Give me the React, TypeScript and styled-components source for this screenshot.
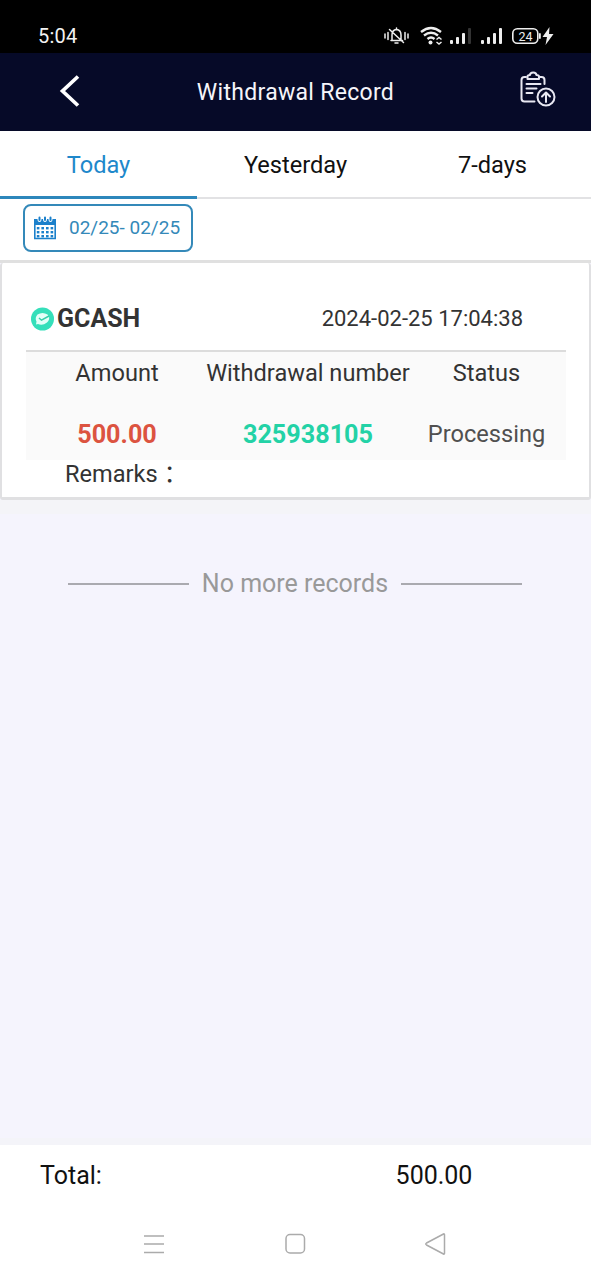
import React from "react";
import styled, { createGlobalStyle } from "styled-components";

const GlobalStyle = createGlobalStyle`
  * { box-sizing: border-box; }
  body {
    margin: 0;
    background: #f5f4fd;
    font-family: Roboto, "Noto Sans CJK SC", sans-serif;
    color: #333;
  }
  svg { display: block; flex: none; }
`;

const Screen = styled.div`
  width: 591px;
  height: 1280px;
  display: flex;
  flex-direction: column;
  overflow: hidden;
`;

const StatusBar = styled.div`
  height: 53px;
  flex: none;
  background: #000;
  color: #f2f2f2;
  display: flex;
  align-items: center;
  justify-content: space-between;
  padding: 19px 36px 0 38px;
`;

const Clock = styled.span`
  font-size: 20px;
  line-height: 34px;
  letter-spacing: 0.2px;
`;

const Header = styled.header`
  height: 78px;
  flex: none;
  background: #060a28;
  color: #f5f5fa;
  display: grid;
  grid-template-columns: 140px 1fr 140px;
  align-items: center;
`;

const BackButton = styled.button`
  border: 0;
  background: none;
  padding: 0 0 2px 58px;
`;

const Title = styled.h1`
  margin: 0;
  padding-top: 2px;
  font-size: 23px;
  line-height: 30px;
  letter-spacing: 0.3px;
  font-weight: 400;
  text-align: center;
  white-space: nowrap;
`;

const RecordButton = styled.button`
  border: 0;
  background: none;
  padding: 0 0 6px 67px;
  justify-self: start;
`;

const Tabs = styled.nav`
  height: 68px;
  flex: none;
  background: #fff;
  display: grid;
  grid-template-columns: repeat(3, 1fr);
  grid-template-rows: 68px;
`;

const Tab = styled.div<{ $active?: boolean }>`
  text-align: center;
  font-size: 23.6px;
  line-height: 69px;
  color: ${(p) => (p.$active ? "#1e88cb" : "#111")};
  box-shadow: inset 0 ${(p) => (p.$active ? "-3px #2d87bb" : "-2px #e2e2e4")};
`;

const FilterBar = styled.div`
  height: 64px;
  flex: none;
  background: #fff;
  padding: 5px 23px 0;
  border-bottom: 3px solid #e0e0e0;
`;

const DateRange = styled.button`
  width: 170px;
  height: 48px;
  padding: 0 0 1px 9px;
  display: flex;
  align-items: center;
  gap: 13px;
  border: 2px solid #3489b9;
  border-radius: 8px;
  background: #fff;
  color: #3489b9;
  font-family: inherit;
  font-size: 19px;
  white-space: nowrap;
`;

const Card = styled.section`
  height: 237px;
  flex: none;
  background: #fff;
  border: 2px solid #e0e0e2;
  border-top: 0;
  border-bottom-width: 3px;
  border-radius: 3px;
  padding: 31px 23px 0 24px;
`;

const CardHead = styled.div`
  height: 58px;
  padding: 0 43px 0 4px;
  display: flex;
  justify-content: space-between;
  border-bottom: 2px solid #dcdcdc;
`;

const Wallet = styled.div`
  display: flex;
  align-items: center;
  height: 48px;
  gap: 2px;
  font-size: 25px;
  font-weight: 700;
`;

const Timestamp = styled.time`
  font-size: 22px;
  line-height: 49px;
`;

const Details = styled.div`
  height: 108px;
  background: #fafafa;
  display: grid;
  grid-template-columns: 182px 200px 157px;
  grid-template-rows: 44px 64px;
  text-align: center;
`;

const Label = styled.div`
  display: flex;
  justify-content: center;
  font-size: 23.6px;
  line-height: 42px;
  white-space: nowrap;
`;

const Value = styled.div<{ $color: string; $strong?: boolean }>`
  font-size: ${(p) => (p.$strong ? 25.2 : 23.6)}px;
  font-weight: ${(p) => (p.$strong ? 700 : 400)};
  line-height: ${(p) => (p.$strong ? 78 : 77)}px;
  color: ${(p) => p.$color};
`;

const Remarks = styled.div`
  display: flex;
  gap: 6px;
  padding-left: 39px;
  font-size: 23.6px;
  line-height: 28px;
`;

const Records = styled.main`
  flex: 1;
  background: #f5f4fd;
  border-top: 14px solid #f4f4f8;
  border-bottom: 7px solid #f4f4f9;
`;

const EndOfList = styled.div`
  display: flex;
  align-items: center;
  justify-content: space-between;
  margin: 54px 69px 0 68px;
  font-size: 25px;
  line-height: 32px;
  color: #999;
`;

const Rule = styled.span`
  width: 121px;
  height: 2px;
  background: #aaaab0;
`;

const TotalBar = styled.footer`
  height: 62px;
  flex: none;
  background: #fff;
  color: #111;
  display: grid;
  grid-template-columns: 277px 314px;
  font-size: 25px;
  line-height: 62px;
`;

const TotalLabel = styled.span`
  padding-left: 40px;
`;

const TotalValue = styled.span`
  text-align: center;
`;

const SystemNav = styled.div`
  height: 73px;
  flex: none;
  background: #fff;
  display: flex;
  justify-content: space-between;
  padding: 25px 144px 0 142px;
`;

const StatusIcons = () => (
  <svg width="172" height="24" viewBox="383 24 172 24" fill="none" stroke="#eee">
    <g strokeWidth="1.500" strokeLinecap="round">
      <path d="M385 34v4M388 32.500v7M405 32.500v7M408 34v4" />
      <path d="M391 40.500h11.500M392 40v-5q0-5 4.500-5.500 4.500.5 4.500 5.500v5M396.500 28v1.500M395 43h3M389.500 29.500l14 13" />
    </g>
    <g strokeWidth="2.400">
      <path d="M421 32q10-8 20 0M424 35.500q7-5.500 14 0M427.500 39q3.500-3 7 0" />
    </g>
    <circle cx="430.500" cy="42.500" r="2" fill="#eee" stroke="none" />
    <path d="M436.500 39.500l2.500-2 2.500 2M436.500 42l2.500 2 2.500-2" strokeWidth="1.500" />
    <g stroke="none" fill="#eee">
      <rect x="450" y="40" width="3" height="4" rx="1" />
      <rect x="456" y="37" width="3" height="7" rx="1" />
      <rect x="462" y="33" width="3" height="11" rx="1" />
      <rect x="468" y="28" width="3" height="16" rx="1" fill="#333" />
      <rect x="481" y="40" width="3" height="4" rx="1" />
      <rect x="487" y="37" width="3" height="7" rx="1" />
      <rect x="493" y="33" width="3" height="11" rx="1" />
      <rect x="499" y="28" width="3" height="16" rx="1" />
      <rect x="539" y="33" width="1.800" height="6" rx="1" />
      <path d="M549.500 27l-7 10h4.500l-1.500 8 8-11h-4.500z" />
      <text x="525.500" y="40.500" fontSize="12.500" textAnchor="middle" fontFamily="Roboto, sans-serif">24</text>
    </g>
    <rect x="512.800" y="28.800" width="25" height="14.500" rx="4.500" strokeWidth="1.600" />
  </svg>
);

const BackIcon = () => (
  <svg width="24" height="34" viewBox="58 74 24 34" fill="none" stroke="#fff" strokeWidth="3.700" strokeLinejoin="miter">
    <path d="M78 76.500L62.500 91 78 105.500" />
  </svg>
);

const RecordIcon = () => (
  <svg width="40" height="40" viewBox="518 69 40 40" fill="none" stroke="#e8e8f2" strokeWidth="2" strokeLinecap="round" strokeLinejoin="round">
    <path d="M526 77h-1.500q-3 0-3 3v18.500q0 3 3 3h10M540 77h1.500q3 0 3 3v4" />
    <path d="M527.500 79v-2.500q0-1.500 2.500-1.500 0-2.500 3.200-2.500t3.200 2.500q2.600 0 2.600 1.500V79z" />
    <path d="M526.500 84h14M526.500 88.500h10M526.500 93h6" />
    <circle cx="546" cy="97" r="8.500" />
    <path d="M546 102v-9M542 96.500l4-4 4 4" />
  </svg>
);

const dots = [11, 15, 19].flatMap((y) => [4, 8.6, 13.2, 17.8].map((x) => [x, y]));

const CalendarIcon = () => (
  <svg width="22" height="24" viewBox="0 0 22 24">
    <path d="M0 3h3.500q0 3 2 3t2-3h1.500q0 3 2 3t2-3h1.500q0 3 2 3t2-3H22V9H0z" fill="#1b80cb" />
    <path d="M5.500 1.500v2.500M16.500 1.500v2.500M11 1.500v2.500" stroke="#1b80cb" strokeWidth="2" strokeLinecap="round" />
    <path d="M.8 8v14.500h20.400V8" fill="none" stroke="#1b80cb" strokeWidth="1.600" />
    {dots.map(([x, y]) => (
      <rect key={`${x}-${y}`} x={x - 1.2} y={y} width="2.600" height="2.400" fill="#1b80cb" />
    ))}
  </svg>
);

const WalletIcon = () => (
  <svg width="25" height="25" viewBox="0 0 25 25">
    <circle cx="12.500" cy="13" r="11.500" fill="#35dfba" />
    <path d="M7.500 8.500Q12.500 5.500 17.500 8.500q3.500 4-.5 8-4.500 3.500-9 1.500l-2 .5.500-3Q4.500 12 7.500 8.500z" fill="#e4fff8" />
    <path d="M9 12l2.500 2.200 7.500-4.200" fill="none" stroke="#35cfaa" strokeWidth="1.500" />
  </svg>
);

const MenuIcon = () => (
  <svg width="24" height="24" viewBox="0 0 24 24" stroke="#ababab" strokeWidth="1.400">
    <path d="M2 4h20M2 12h20M2 20.500h20" />
  </svg>
);

const HomeIcon = () => (
  <svg width="24" height="24" viewBox="0 0 24 24" fill="none" stroke="#ababab" strokeWidth="1.500">
    <rect x="3" y="2.500" width="18.500" height="18.500" rx="4" />
  </svg>
);

const TriangleIcon = () => (
  <svg width="24" height="24" viewBox="0 0 24 24" fill="none" stroke="#ababab" strokeWidth="1.500" strokeLinejoin="round">
    <path d="M20.500 2q1-.5 1 1v18q0 1.500-1 1L3.500 13q-1.500-1 0-2z" />
  </svg>
);

export default function App() {
  return (
    <Screen>
      <GlobalStyle />
      <StatusBar>
        <Clock>5:04</Clock>
        <StatusIcons />
      </StatusBar>
      <Header>
        <BackButton aria-label="Back"><BackIcon /></BackButton>
        <Title>Withdrawal Record</Title>
        <RecordButton aria-label="Records"><RecordIcon /></RecordButton>
      </Header>
      <Tabs>
        <Tab $active>Today</Tab>
        <Tab>Yesterday</Tab>
        <Tab>7-days</Tab>
      </Tabs>
      <FilterBar>
        <DateRange><CalendarIcon />02/25- 02/25</DateRange>
      </FilterBar>
      <Card>
        <CardHead>
          <Wallet><WalletIcon />GCASH</Wallet>
          <Timestamp>2024-02-25 17:04:38</Timestamp>
        </CardHead>
        <Details>
          <Label>Amount</Label>
          <Label>Withdrawal number</Label>
          <Label>Status</Label>
          <Value $color="#dc5340" $strong>500.00</Value>
          <Value $color="#23d2a6" $strong>325938105</Value>
          <Value $color="#505050">Processing</Value>
        </Details>
        <Remarks>Remarks<span>：</span></Remarks>
      </Card>
      <Records>
        <EndOfList><Rule />No more records<Rule /></EndOfList>
      </Records>
      <TotalBar>
        <TotalLabel>Total:</TotalLabel>
        <TotalValue>500.00</TotalValue>
      </TotalBar>
      <SystemNav>
        <MenuIcon />
        <HomeIcon />
        <TriangleIcon />
      </SystemNav>
    </Screen>
  );
}
